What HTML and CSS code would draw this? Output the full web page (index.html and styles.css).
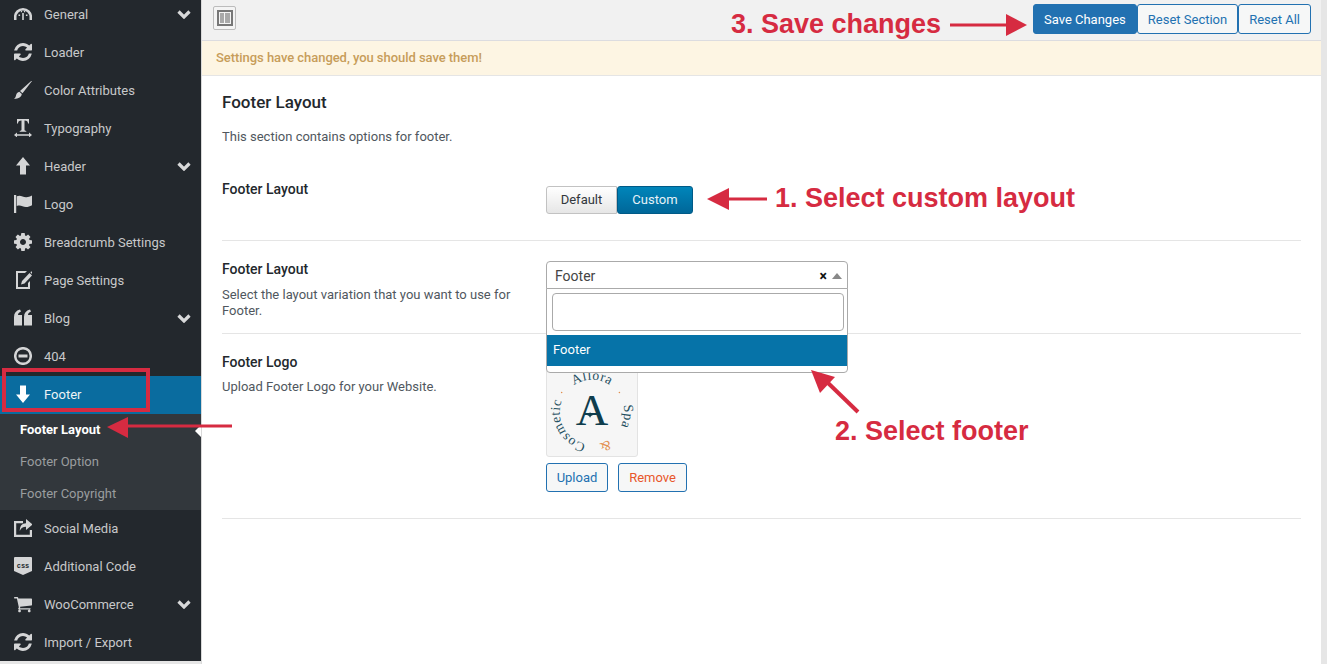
FILE: index.html
```html
<!DOCTYPE html>
<html lang="en">
<head>
<meta charset="utf-8">
<title>Footer Layout</title>
<link rel="stylesheet" href="styles.css">
</head>
<body>
<div class="page">
  <aside class="sidebar">
    <ul class="menu">
      <li class="item"><svg class="ico" viewBox="1 1 18 18"><path class="st" d="M2.200 16V13a7.800 7.800 0 0 1 15.600 0v3" stroke-width="2.600"/><path d="M9.200 9h1.600v7H9.200zM5.500 10.500h1.600v1.600H5.500zM12.900 10.500h1.600v1.600h-1.600zM7.800 7h1.300v1.300H7.800zM10.900 7h1.300v1.300h-1.300z"/></svg><span class="lbl">General</span><svg class="chev" viewBox="0 0 14 9"><path d="M1.500 1.500 7 7l5.500-5.500"/></svg></li>
      <li class="item"><svg class="ico" viewBox="128 128 1536 1536"><path d="M1639 1056q0 5-1 7-64 268-268 434.500t-478 166.500q-146 0-282.500-55t-243.500-157l-129 129q-19 19-45 19t-45-19-19-45v-448q0-26 19-45t45-19h448q26 0 45 19t19 45-19 45l-137 137q71 66 161 102t187 36q134 0 250-65t186-179q11-17 53-117 8-23 30-23h192q13 0 22.500 9.500t9.500 22.500zm25-800v448q0 26-19 45t-45 19h-448q-26 0-45-19t-19-45 19-45l138-138q-148-137-349-137-134 0-250 65t-186 179q-11 17-53 117-8 23-30 23h-199q-13 0-22.500-9.500t-9.500-22.500v-7q65-268 270-434.500t480-166.500q146 0 284 55.500t245 156.500l130-129q19-19 45-19t45 19 19 45z"/></svg><span class="lbl">Loader</span></li>
      <li class="item"><svg class="ico" viewBox="1 1 18 18"><path d="M18.600.600 19 1 9.500 13.200 7 11zM6.300 11.700 8.800 14c-.3 2.800-3 4.800-7.800 5 1.700-1.200 1.700-2.700 2.300-4.500.5-1.400 1.500-2.300 3-2.800z"/></svg><span class="lbl">Color Attributes</span></li>
      <li class="item"><svg class="ico" viewBox="1 1 18 18"><path d="M4 1h12v4.500h-1C14.800 3.300 14 2.500 11.500 2.500v9c0 1 .6 1.300 1.800 1.400v.8H6.700v-.8c1.200-.1 1.800-.4 1.800-1.400v-9C6 2.500 5.200 3.300 5 5.500H4zM1 17l3-2.400v1.700h12v-1.700l3 2.400-3 2.400v-1.700H4v1.700z"/></svg><span class="lbl">Typography</span></li>
      <li class="item"><svg class="ico" viewBox="1 1 18 18"><path d="M10 1l7 8.500h-4V18.500H7V9.500H3z"/></svg><span class="lbl">Header</span><svg class="chev" viewBox="0 0 14 9"><path d="M1.500 1.500 7 7l5.500-5.500"/></svg></li>
      <li class="item"><svg class="ico" viewBox="1 1 18 18"><path d="M1 1h2.200v18H1zM3.800 2.200c4-1.800 6 1.300 9.700 1 1.800-.1 3.300-.6 5.500-1.700v9.800c-2.200 1.200-3.900 1.700-5.700 1.800-3.600.2-5.600-2.700-9.500-1z"/></svg><span class="lbl">Logo</span></li>
      <li class="item"><svg class="ico" viewBox="128 128 1536 1536"><path d="M1152 896q0-106-75-181t-181-75-181 75-75 181 75 181 181 75 181-75 75-181zm512-109v222q0 12-8 23t-20 13l-185 28q-19 54-39 91 35 50 107 138 10 12 10 25t-9 23q-27 37-99 108t-94 71q-12 0-26-9l-138-108q-44 23-91 38-16 136-29 186-7 28-36 28h-222q-14 0-24.500-8.500t-11.500-21.500l-28-184q-49-16-90-37l-141 107q-10 9-25 9-14 0-25-11-126-114-165-168-7-10-7-23 0-12 8-23 15-21 51-66.500t54-70.500q-27-50-41-99l-183-27q-13-2-21-12.500t-8-23.500v-222q0-12 8-23t19-13l186-28q14-46 39-92-40-57-107-138-10-12-10-24 0-10 9-23 26-36 98.500-107.500t94.500-71.500q13 0 26 10l138 107q44-23 91-38 16-136 29-186 7-28 36-28h222q14 0 24.500 8.500t11.500 21.500l28 184q49 16 90 37l142-107q9-9 24-9 13 0 25 10 129 119 165 170 7 8 7 22 0 12-8 23-15 21-51 66.500t-54 70.500q26 50 41 98l183 28q13 2 21 12.500t8 23.500z"/></svg><span class="lbl">Breadcrumb Settings</span></li>
      <li class="item"><svg class="ico" viewBox="1 1 18 18"><path d="M3 1h11l-2 2H5v14h10v-4l2-2v8H3z"/><path d="M16.500 3 19 5.500l-7.500 8-3.500 1 1-3.500zM17.300 2.200l1-1 2.500 2.500-1 1z"/></svg><span class="lbl">Page Settings</span></li>
      <li class="item"><svg class="ico" viewBox="1 1 18 18"><path d="M1 9c0-4 2-6.500 6-7.500L8 3.500C6 4.300 5.200 5.300 5 7h4v10.500H1zM11 9c0-4 2-6.500 6-7.500l1 2c-2 .8-2.800 1.800-3 3.500h4v10.500h-8z"/></svg><span class="lbl">Blog</span><svg class="chev" viewBox="0 0 14 9"><path d="M1.500 1.500 7 7l5.500-5.500"/></svg></li>
      <li class="item"><svg class="ico" viewBox="1 1 18 18"><circle class="st" cx="10" cy="10" r="7.800" stroke-width="2.500"/><path d="M5.500 8.500h9v3h-9z"/></svg><span class="lbl">404</span></li>
      <li class="item item-active"><svg class="ico" viewBox="1 1 18 18"><path d="M7 1.500h6V10.500h4L10 19 3 10.500h4z"/></svg><span class="lbl">Footer</span>
      </li>
      <li>
        <ul class="submenu">
          <li class="sub sub-current">Footer Layout</li>
          <li class="sub">Footer Option</li>
          <li class="sub">Footer Copyright</li>
        </ul>
      </li>
      <li class="item"><svg class="ico" viewBox="1 1 18 18"><path d="M1 3h9v2.200H3.200v11.600h13.600V12H19v7H1z"/><path d="M13 1l6.500 5.500L13 12V8.800C9.800 8.800 8 10 6.800 13c0-5 2-7.700 6.200-7.800z"/></svg><span class="lbl">Social Media</span></li>
      <li class="item"><svg class="ico" viewBox="1 1 18 18"><path d="M2 1h16a1 1 0 0 1 1 1v13l-9 4-9-4V2a1 1 0 0 1 1-1z"/><text class="css-tag" x="10" y="11.500">css</text></svg><span class="lbl">Additional Code</span></li>
      <li class="item"><svg class="ico" viewBox="64 128 1664 1536"><path d="M704 1536q0 52-38 90t-90 38-90-38-38-90 38-90 90-38 90 38 38 90zm896 0q0 52-38 90t-90 38-90-38-38-90 38-90 90-38 90 38 38 90zm128-1088v512q0 24-16.500 42.500t-40.500 21.500l-1044 122q13 60 13 70 0 16-24 64h920q26 0 45 19t19 45-19 45-45 19h-1024q-26 0-45-19t-19-45q0-11 8-31.500t16-36 21.500-40 15.500-29.500l-177-823h-204q-26 0-45-19t-19-45 19-45 45-19h256q16 0 28.500 6.500t19.500 15.500 13 24.500 8 26 5.500 29.500 4.500 26h1201q26 0 45 19t19 45z"/></svg><span class="lbl">WooCommerce</span><svg class="chev" viewBox="0 0 14 9"><path d="M1.500 1.500 7 7l5.500-5.500"/></svg></li>
      <li class="item"><svg class="ico" viewBox="128 128 1536 1536"><path d="M1639 1056q0 5-1 7-64 268-268 434.500t-478 166.500q-146 0-282.500-55t-243.500-157l-129 129q-19 19-45 19t-45-19-19-45v-448q0-26 19-45t45-19h448q26 0 45 19t19 45-19 45l-137 137q71 66 161 102t187 36q134 0 250-65t186-179q11-17 53-117 8-23 30-23h192q13 0 22.500 9.500t9.500 22.500zm25-800v448q0 26-19 45t-45 19h-448q-26 0-45-19t-19-45 19-45l138-138q-148-137-349-137-134 0-250 65t-186 179q-11 17-53 117-8 23-30 23h-199q-13 0-22.500-9.500t-9.500-22.500v-7q65-268 270-434.500t480-166.500q146 0 284 55.500t245 156.500l130-129q19-19 45-19t45 19 19 45z"/></svg><span class="lbl">Import / Export</span></li>
    </ul>
  </aside>

  <main class="main">
    <div class="topbar">
      <button class="layout-btn" type="button"><svg viewBox="0 0 16 16" width="16" height="16"><path class="layout-frame" d="M0 0h16v16H0zM2 2v12h12V2z"/><path class="layout-in" d="M3 3h4v10H3zM8 3h5v10H8z"/></svg></button>
      <div class="actions">
        <button class="act act-primary" type="button">Save Changes</button>
        <button class="act" type="button">Reset Section</button>
        <button class="act" type="button">Reset All</button>
      </div>
    </div>
    <div class="notice">Settings have changed, you should save them!</div>
    <section class="content">
      <h2 class="title">Footer Layout</h2>
      <p class="intro">This section contains options for footer.</p>

      <div class="row row-toggle">
        <div class="info"><h3 class="label">Footer Layout</h3></div>
        <div class="control">
          <div class="toggle"><span class="tg">Default</span><span class="tg tg-on">Custom</span></div>
        </div>
      </div>

      <div class="row row-select">
        <div class="info">
          <h3 class="label">Footer Layout</h3>
          <p class="desc">Select the layout variation that you want to use for Footer.</p>
        </div>
        <div class="control control-select">
          <div class="select"><span class="select-value">Footer</span><span class="select-clear">×</span><span class="select-caret"></span></div>
          <div class="dropdown">
            <div class="search"></div>
            <div class="option">Footer</div>
          </div>
        </div>
      </div>

      <div class="row row-logo">
        <div class="info">
          <h3 class="label">Footer Logo</h3>
          <p class="desc">Upload Footer Logo for your Website.</p>
        </div>
        <div class="control">
          <div class="logo">
            <svg viewBox="0 0 92 92" width="90" height="90">
              <defs><path id="ring" d="M46 80A33 33 0 0 1 46 14A33 33 0 0 1 46 80A33 33 0 0 1 46 14A33 33 0 0 1 46 80"/></defs>
              <text class="ring-text"><textPath href="#ring" startOffset="25%" text-anchor="middle">Allora</textPath></text>
              <text class="ring-text"><textPath href="#ring" startOffset="38.500%" text-anchor="middle">Spa</textPath></text>
              <text class="ring-text ring-amp"><textPath href="#ring" startOffset="47%" text-anchor="middle">&amp;</textPath></text>
              <text class="ring-text"><textPath href="#ring" startOffset="8.500%" text-anchor="middle">Cosmetic</textPath></text>
              <circle class="dot" cx="15" cy="27" r=".8"/><circle class="dot" cx="74" cy="27" r=".8"/>
              <text class="logo-a" x="46" y="60">A</text>
              <path class="logo-star" d="M44 47l1 2 2 1-2 1-1 2-1-2-2-1 2-1z"/>
            </svg>
          </div>
          <div class="logo-actions">
            <button class="small small-upload" type="button">Upload</button>
            <button class="small small-danger" type="button">Remove</button>
          </div>
        </div>
      </div>
    </section>
  </main>
</div>

<svg class="marks" viewBox="0 0 1327 664" width="1327" height="664">
  <rect class="mark-box" x="4" y="370" width="144" height="40"/>
  <path class="mark-line" d="M232 426H125"/>
  <path class="mark-head" d="M107 427 128 417V438z"/>
  <path class="mark-line" d="M767 199H725"/>
  <path class="mark-head" d="M707 199 729 188V210z"/>
  <path class="mark-line" d="M950 25H1010"/>
  <path class="mark-head" d="M1027 25 1006 14V36z"/>
  <path class="mark-line mark-line-thick" d="M858 412 826 381"/>
  <path class="mark-head" d="M811 370 835 377 820 393z"/>
</svg>
<div class="note note-one">1. Select custom layout</div>
<div class="note note-two">2. Select footer</div>
<div class="note note-three">3. Save changes</div>
</body>
</html>
```
FILE: styles.css
```css
* { box-sizing: border-box; }
html, body { margin: 0; padding: 0; height: 664px; overflow: hidden; }
body { background: #f1f1f1; font-family: Roboto, "Liberation Sans", sans-serif; font-size: 13px; color: #50575e; position: relative; }
h2, h3, p, ul { margin: 0; padding: 0; list-style: none; }
button { font-family: inherit; }

.page { display: flex; width: 1327px; height: 664px; background: #e6e6e6; }

.sidebar { width: 201px; flex: none; height: 665px; margin-top: -4px; background: #23282d; }
.menu { display: flex; flex-direction: column; }
.item { display: flex; align-items: center; height: 38px; padding: 0 10px 2px 13px; color: #c8c9ca; }
.item-active { background: #0a6c9f; color: #eef3f6; }
.ico { width: 20px; height: 20px; flex: none; padding: 1px; fill: #d4d5d6; }
.item-active .ico { fill: #fff; }
.ico .st { fill: none; stroke: #d4d5d6; }
.css-tag { fill: #23282d; font: bold 7px "Liberation Mono", monospace; text-anchor: middle; }
.lbl { margin-left: 11px; flex: 1; }
.chev { width: 14px; height: 9px; fill: none; stroke: #d8d9da; stroke-width: 3.200; }
.submenu { background: #32373c; height: 96px; }
.sub { height: 32px; line-height: 32px; padding-left: 20px; color: #9a9d9f; position: relative; }
.sub-current { color: #fff; font-weight: 700; }
.sub-current::after { content: ""; position: absolute; right: 0; top: 11px; border: 6px solid transparent; border-right-color: #fff; border-left-width: 0; }

.main { width: 1120px; flex: none; background: #fff; border-left: 1px solid #d9d9d9; display: flex; flex-direction: column; }
.topbar { height: 41px; flex: none; background: #f1f1f1; border-bottom: 1px solid #dcdce0; display: flex; align-items: flex-start; justify-content: space-between; padding: 4px 10px 0 11px; }
.layout-btn { width: 23px; height: 24px; margin-top: 2px; padding: 0; background: #f4f4f4; border: 1px solid #bcbcbc; border-radius: 2px; display: flex; align-items: center; justify-content: center; }
.layout-frame { fill: #777; fill-rule: evenodd; }
.layout-in { fill: #a9a9a9; }
.actions { display: flex; }
.act { height: 30px; padding: 0 10px; font-size: 13px; background: #f6f7f7; color: #2271b1; border: 1px solid #2271b1; border-radius: 3px; }
.act-primary { background: #2271b1; color: #fff; }
.notice { height: 35px; flex: none; background: #fdf5e3; border-bottom: 1px solid #e5e5e5; padding: 0 14px; line-height: 33px; color: #c79d5a; font-weight: 500; letter-spacing: -.05px; }

.content { padding: 16px 20px 0; }
.title { font-size: 17px; line-height: 20px; font-weight: 500; color: #23282d; }
.intro { margin-top: 16px; line-height: 18px; }
.row { display: grid; grid-template-columns: 324px 1fr; border-bottom: 1px solid #e5e5e5; }
.label { font-size: 14px; line-height: 16px; font-weight: 500; color: #23282d; }
.desc { margin-top: 9px; line-height: 16px; width: 300px; }
.row-toggle { padding: 35px 0 26px; }
.row-toggle .control { padding-top: 5px; }
.row-select { padding: 20px 0 14px; }
.row-select .desc { margin-top: 10px; }
.row-logo { padding: 20px 0 26px; }
.row-logo .control { padding-top: 11px; }

.toggle { display: flex; }
.tg { height: 28px; line-height: 26px; width: 71px; text-align: center; color: #32373c; border: 1px solid #c2c2c2; border-radius: 3px 0 0 3px; background: linear-gradient(#fff, #e6e6e6); }
.tg-on { width: 76px; color: #e6f2f8; border-color: #005a87; border-radius: 3px; background: linear-gradient(#0085ba, #006799); }

.control-select { position: relative; }
.select { width: 302px; height: 28px; border: 1px solid #aaa; border-radius: 4px 4px 0 0; background: #fff; display: flex; align-items: center; padding: 1px 5px 0 8px; }
.select-value { flex: 1; font-size: 14px; color: #444; }
.select-clear { font-size: 14px; font-weight: 700; color: #111; margin-right: 5px; line-height: 1; }
.select-caret { width: 0; height: 0; border: 5px solid transparent; border-top-width: 0; border-bottom: 6px solid #888; }
.dropdown { position: absolute; z-index: 2; left: 0; top: 27px; width: 302px; height: 85px; background: #fff; border: 1px solid #aaa; border-radius: 0 0 4px 4px; padding: 4px 0 0; }
.search { height: 38px; margin: 0 3px 0 5px; border: 1px solid #aaa; border-radius: 4px; }
.option { height: 31px; margin-top: 4px; background: #0673a8; color: #fff; line-height: 29px; padding-left: 6px; }

.logo { width: 92px; height: 92px; background: #f6f6f6; border: 1px solid #e3e3e3; border-radius: 3px; overflow: hidden; }
.logo svg { display: block; }
.ring-text { font: 14px "Liberation Serif", serif; letter-spacing: .6px; fill: #1e4f60; }
.ring-amp { fill: #e2904f; font-size: 14px; }
.dot { fill: #e2904f; }
.logo-a { font: 46px "Liberation Serif", serif; fill: #0f3d4d; text-anchor: middle; }
.logo-star { fill: #0f3d4d; }
.logo-actions { display: flex; gap: 10px; margin-top: 6px; }
.small { height: 29px; padding: 0; font-size: 13px; width: 69px; background: #f6f7f7; color: #2271b1; border: 1px solid #2271b1; border-radius: 3px; }
.small-upload { width: 62px; }
.small-danger { color: #e8562a; }

.marks { position: absolute; left: 0; top: 0; z-index: 5; pointer-events: none; }
.mark-box { fill: none; stroke: #d62b41; stroke-width: 4; }
.mark-line { fill: none; stroke: #d62b41; stroke-width: 3; }
.mark-line-thick { stroke-width: 4; }
.mark-head { fill: #d62b41; }
.note { position: absolute; z-index: 6; font: bold 27px/32px "Liberation Sans", Arial, sans-serif; color: #d62b41; white-space: nowrap; }
.note-one { left: 775px; top: 182px; }
.note-two { left: 835px; top: 415px; }
.note-three { left: 731px; top: 8px; }
```
